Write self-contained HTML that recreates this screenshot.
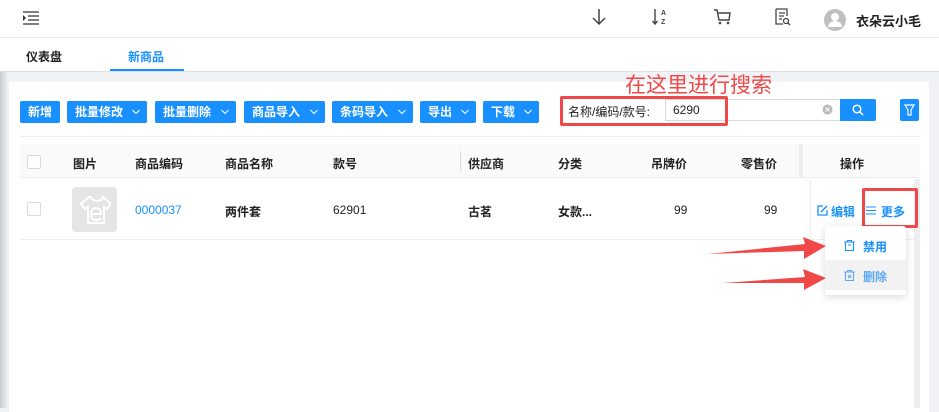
<!DOCTYPE html>
<html><head><meta charset="utf-8"><style>
*{margin:0;padding:0;box-sizing:border-box}
body{width:939px;height:408px;overflow:hidden;background:#f0f2f5;font-family:"Liberation Sans","Noto Sans CJK SC",sans-serif;font-size:12px;color:#222;position:relative}
.a{position:absolute}
.hdr{left:0;top:0;width:939px;height:37px;background:#fff;box-shadow:0 1px 4px rgba(0,0,0,.08)}
.tabs{left:0;top:38px;width:939px;height:34px;background:#fff;border-bottom:1px solid #dcdfe6}
.panel{left:9px;top:82px;width:920px;height:330px;background:#fff}
.btn{position:absolute;top:101px;height:22px;background:#1890ff;color:#fff;font-weight:bold;font-size:12px;line-height:22px;padding-left:8px;border-radius:2px}
.btn svg{position:absolute;right:7px;top:8px}
.th{top:155px;font-weight:bold;font-size:12px}
.td{top:203px;font-size:12px}
.cb{width:14px;height:14px;border:1px solid #d9d9d9;background:#fff;border-radius:2px}
.red{border:3px solid #f04848;border-radius:2px}
</style></head><body>
<div class="a" style="left:0;top:72px;width:8px;height:336px;background:linear-gradient(90deg,#c8ccd2,#eef0f3)"></div>
<div class="a hdr"></div>
<svg class="a" style="left:23px;top:11px" width="16" height="14"><path d="M0 1h16M5 5h11M5 9h11M0 13h16" stroke="#333" stroke-width="1.3"/><path d="M0 4l3 3-3 3z" fill="#333"/></svg>
<svg class="a" style="left:590px;top:8px" width="18" height="18"><path d="M9 1v15M3 10l6 6 6-6" stroke="#444" stroke-width="1.5" fill="none"/></svg>
<svg class="a" style="left:652px;top:8px" width="16" height="18"><path d="M3 1v15M0.5 13l2.5 3 2.5-3" stroke="#444" stroke-width="1.4" fill="none"/><text x="9" y="7" font-size="7" font-family="Liberation Sans" font-weight="bold" fill="#444">A</text><text x="9" y="16" font-size="7" font-family="Liberation Sans" font-weight="bold" fill="#444">Z</text></svg>
<svg class="a" style="left:713px;top:9px" width="18" height="16"><path d="M1 1h3l2 10h10l1-7H5" stroke="#444" stroke-width="1.4" fill="none"/><circle cx="7" cy="14" r="1.3" fill="#444"/><circle cx="15" cy="14" r="1.3" fill="#444"/></svg>
<svg class="a" style="left:775px;top:8px" width="16" height="18"><path d="M1 1h11v7M1 1v15h7M4 5h6M4 8h5M4 11h3" stroke="#444" stroke-width="1.3" fill="none"/><circle cx="11" cy="13" r="2.5" stroke="#444" stroke-width="1.3" fill="none"/><path d="M13 15l2 2" stroke="#444" stroke-width="1.3"/></svg>
<svg class="a" style="left:824px;top:9px" width="22" height="22"><circle cx="11" cy="11" r="11" fill="#bfbfbf"/><circle cx="11" cy="8" r="4" fill="#fff"/><path d="M4 18a7 6 0 0 1 14 0z" fill="#fff"/></svg>
<div class="a" style="left:856px;top:11px;font-size:13px;font-weight:bold">衣朵云小毛</div>
<div class="a tabs"></div>
<div class="a" style="left:26px;top:48px;font-size:12px;font-weight:bold">仪表盘</div>
<div class="a" style="left:128px;top:48px;font-size:12px;font-weight:bold;color:#1890ff">新商品</div>
<div class="a" style="left:110px;top:69px;width:74px;height:2px;background:#1890ff"></div>
<div class="a panel"></div>
<div class="a" style="left:929px;top:82px;width:10px;height:326px;background:#f0f2f5"></div>
<div class="btn" style="left:20px;width:40px">新增</div>
<div class="btn" style="left:67px;width:80px">批量修改<svg width="8" height="6"><path d="M0.5 1l3.5 3.5L7.5 1" stroke="#fff" fill="none"/></svg></div>
<div class="btn" style="left:155px;width:81px">批量删除<svg width="8" height="6"><path d="M0.5 1l3.5 3.5L7.5 1" stroke="#fff" fill="none"/></svg></div>
<div class="btn" style="left:244px;width:81px">商品导入<svg width="8" height="6"><path d="M0.5 1l3.5 3.5L7.5 1" stroke="#fff" fill="none"/></svg></div>
<div class="btn" style="left:332px;width:81px">条码导入<svg width="8" height="6"><path d="M0.5 1l3.5 3.5L7.5 1" stroke="#fff" fill="none"/></svg></div>
<div class="btn" style="left:420px;width:56px">导出<svg width="8" height="6"><path d="M0.5 1l3.5 3.5L7.5 1" stroke="#fff" fill="none"/></svg></div>
<div class="btn" style="left:483px;width:56px">下载<svg width="8" height="6"><path d="M0.5 1l3.5 3.5L7.5 1" stroke="#fff" fill="none"/></svg></div>
<div class="a" style="left:625px;top:73px;font-size:21px;color:#f04848;line-height:26px">在这里进行搜索</div>
<div class="a" style="left:568px;top:103px;font-size:12px;color:#222">名称/编码/款号:</div>
<div class="a" style="left:665px;top:99px;width:176px;height:22px;border:1px solid #d9d9d9;background:#fff"></div>
<div class="a" style="left:673px;top:103px;font-size:12px">6290</div>
<svg class="a" style="left:822px;top:104px" width="11" height="11"><circle cx="5.5" cy="5.5" r="5" fill="#bbb"/><path d="M3.5 3.5l4 4M7.5 3.5l-4 4" stroke="#fff"/></svg>
<div class="a" style="left:840px;top:99px;width:36px;height:22px;background:#1890ff;border-radius:0 2px 2px 0"></div>
<svg class="a" style="left:852px;top:104px" width="12" height="12"><circle cx="5" cy="5" r="3.8" stroke="#fff" stroke-width="1.5" fill="none"/><path d="M8 8l3 3" stroke="#fff" stroke-width="1.5"/></svg>
<div class="a" style="left:900px;top:99px;width:19px;height:22px;background:#1890ff;border-radius:2px"></div>
<svg class="a" style="left:904px;top:104px" width="11" height="12"><path d="M1 1h9L7 6v5H4V6z" stroke="#fff" stroke-width="1.2" fill="none"/></svg>
<div class="a red" style="left:560px;top:96px;width:168px;height:30px"></div>
<div class="a" style="left:20px;top:136px;width:900px;height:1px;background:#eee"></div>
<div class="a" style="left:20px;top:144px;width:900px;height:34px;background:#fafafa;border-bottom:1px solid #eee"></div>
<div class="a cb" style="left:27px;top:155px"></div>
<div class="a th" style="left:73px">图片</div><div class="a th" style="left:135px">商品编码</div><div class="a th" style="left:225px">商品名称</div><div class="a th" style="left:333px">款号</div>
<div class="a" style="left:460px;top:151px;width:1px;height:20px;background:#ddd"></div>
<div class="a th" style="left:468px">供应商</div><div class="a th" style="left:558px">分类</div><div class="a th" style="left:651px">吊牌价</div><div class="a th" style="left:741px">零售价</div>
<div class="a" style="left:799px;top:144px;width:4px;height:34px;background:#eee"></div>
<div class="a th" style="left:840px">操作</div>
<div class="a" style="left:20px;top:239px;width:900px;height:1px;background:#eee"></div>
<div class="a cb" style="left:27px;top:202px"></div>
<div class="a" style="left:72px;top:187px;width:45px;height:45px;background:#e5e5e5;border-radius:4px"></div>
<svg class="a" style="left:79px;top:195px" width="32" height="30"><path d="M10 2L2 9l4 5 3-2v16h16V12l3 2 4-5-8-7c-1 3-4 4-6 4s-5-1-6-4z" stroke="#fff" stroke-width="2" fill="none"/><path d="M12 19h10c0-4-2-6-5-6s-5 2-5 6c0 4 2 6 5 6 2 0 4-1 5-2" stroke="#fff" stroke-width="2" fill="none"/></svg>
<div class="a td" style="left:135px;color:#1890ff">0000037</div>
<div class="a td" style="left:225px;font-weight:bold">两件套</div>
<div class="a td" style="left:333px">62901</div>
<div class="a td" style="left:468px;font-weight:bold">古茗</div>
<div class="a td" style="left:558px;font-weight:bold">女款...</div>
<div class="a td" style="left:674px">99</div><div class="a td" style="left:764px">99</div>
<div class="a" style="left:810px;top:179px;width:1px;height:60px;background:#eee;box-shadow:-2px 0 4px rgba(0,0,0,.06)"></div>
<div class="a" style="left:914px;top:179px;width:6px;height:229px;background:#eee"></div>
<svg class="a" style="left:817px;top:205px" width="11" height="11"><path d="M6 1H1v9h9V5" stroke="#1890ff" stroke-width="1.3" fill="none"/><path d="M4 7l6-6" stroke="#1890ff" stroke-width="1.5"/></svg>
<div class="a td" style="left:831px;color:#1890ff;font-weight:bold">编辑</div>
<svg class="a" style="left:866px;top:206px" width="10" height="9"><path d="M0 1h10M0 4.5h10M0 8h10" stroke="#1890ff"/></svg>
<div class="a td" style="left:881px;color:#1890ff;font-weight:bold">更多</div>
<div class="a red" style="left:862px;top:188px;width:56px;height:40px"></div>
<div class="a" style="left:825px;top:226px;width:81px;height:69px;background:#fff;box-shadow:0 2px 8px rgba(0,0,0,.15);border-radius:3px"></div>
<div class="a" style="left:825px;top:260px;width:81px;height:30px;background:#f2f2f2"></div>
<svg class="a" style="left:844px;top:240px" width="11" height="11"><path d="M0 2h11M3.5 2V0.5h4V2M1.5 2v8.5h8V2M4 5h3" stroke="#1890ff" stroke-width="1.1" fill="none"/></svg>
<div class="a" style="left:863px;top:238px;font-size:12px;color:#1890ff;font-weight:bold">禁用</div>
<svg class="a" style="left:844px;top:270px" width="11" height="11"><path d="M0 2h11M3.5 2V0.5h4V2M1.5 2v8.5h8V2M4 5l3 3M7 5l-3 3" stroke="#5aa9f5" stroke-width="1.1" fill="none"/></svg>
<div class="a" style="left:863px;top:268px;font-size:12px;color:#5aa9f5;font-weight:bold">删除</div>
<svg class="a" style="left:0;top:0" width="939" height="408"><path d="M708 254L805 244L803 237L826 246L804 259L804 251Z" fill="#f04848"/><path d="M723 283L805 277L803 269L826 278L804 290L804 283Z" fill="#f04848"/></svg>
</body></html>
